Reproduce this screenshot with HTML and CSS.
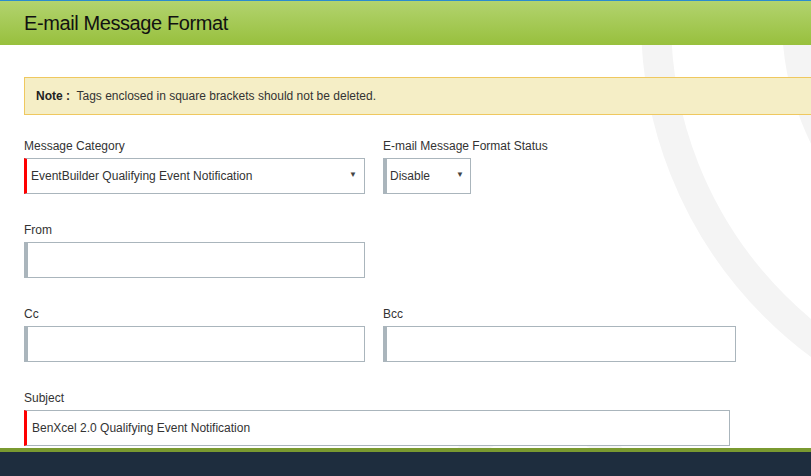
FILE: index.html
```html
<!DOCTYPE html>
<html lang="en">
<head>
    <meta charset="utf-8">
    <title>E-mail Message Format</title>
    <link rel="stylesheet" href="styles.css">
</head>
<body>

    <svg class="watermark" width="811" height="476" viewBox="0 0 811 476" aria-hidden="true">
        <circle cx="1060" cy="20" r="404" />
        <circle cx="1060" cy="20" r="263" />
        <circle cx="540" cy="522" r="100" class="faint" />
    </svg>

    <div class="page-header">
        <h1 class="page-title">E-mail Message Format</h1>
    </div>

    <div class="page-content">
        <div class="note">
            <b>Note :</b>&nbsp; Tags enclosed in square brackets should not be deleted.
        </div>

        <form class="mail-form">
            <div class="field field-wide">
                <label>Message Category</label>
                <div class="select-wrap required">
                    <select>
                        <option>EventBuilder Qualifying Event Notification</option>
                    </select>
                </div>
            </div>
            <div class="field">
                <label>E-mail Message Format Status</label>
                <div class="select-wrap select-small">
                    <select>
                        <option>Disable</option>
                    </select>
                </div>
            </div>

            <div class="field field-wide">
                <label>From</label>
                <input type="text" class="text-input">
            </div>
            <div class="field"></div>

            <div class="field field-wide">
                <label>Cc</label>
                <input type="text" class="text-input">
            </div>
            <div class="field">
                <label>Bcc</label>
                <input type="text" class="text-input">
            </div>

            <div class="field field-full">
                <label>Subject</label>
                <input type="text" class="text-input required" value="BenXcel 2.0 Qualifying Event Notification">
            </div>
        </form>
    </div>

    <div class="page-footer"></div>

</body>
</html>
```

FILE: styles.css
```css
html, body {
    margin:0;
    padding:0;
}

body {
    position:relative;
    height:476px;
    overflow:hidden;
    background:#fff;
    color:#333;
    font:normal 12px "Liberation Sans", Arial, sans-serif;
}

/* background logo */
.watermark {
    position:absolute;
    top:0;
    left:0;
    z-index:0;
    pointer-events:none;
}

.watermark circle {
    fill:none;
    stroke:#f4f4f4;
    stroke-width:30;
}

.watermark .faint {
    stroke:#f7f7f7;
    stroke-width:22;
}

/* header */
.page-header {
    position:relative;
    z-index:1;
    height:44px;
    border-top:1px solid #2a8ccf;
    background:linear-gradient(to bottom, #b2d36f 0%, #98c03d 100%);
    padding-left:24px;
}

.page-title {
    margin:0;
    font:normal 20px/44px "Liberation Sans", Arial, sans-serif;
    letter-spacing:-0.4px;
    color:#111;
}

/* content */
.page-content {
    position:relative;
    z-index:1;
    padding:32px 0 0 24px;
}

.note {
    height:36px;
    line-height:36px;
    margin-right:-40px;
    padding:0 11px;
    border:1px solid #efc85f;
    background:#f5eec6;
    color:#333;
}

.note b {
    color:#222;
}

.mail-form {
    display:flex;
    flex-wrap:wrap;
    column-gap:18px;
    margin-top:23px;
    width:720px;
}

.field {
    width:353px;
    margin-bottom:28px;
}

.field-wide {
    width:341px;
}

.field-full {
    width:706px;
}

.field label {
    display:block;
    line-height:16px;
    margin-bottom:4px;
    color:#333;
}

.text-input, .select-wrap select {
    display:block;
    box-sizing:border-box;
    width:100%;
    height:36px;
    margin:0;
    border:1px solid #aab5bc;
    border-left:4px solid #aab5bc;
    border-radius:0;
    background:#fff;
    color:#333;
    font:normal 12px "Liberation Sans", Arial, sans-serif;
    outline:0;
}

.text-input {
    padding:0 4px;
}

.text-input.required {
    border-left:3px solid #f00;
    padding-left:5px;
}

.select-wrap {
    position:relative;
}

.select-wrap select {
    -webkit-appearance:none;
    appearance:none;
    padding:0 20px 0 3px;
}

.select-wrap.required select {
    border-left:3px solid #f00;
    padding-left:4px;
}

.select-wrap:after {
    content:"\25BC";
    position:absolute;
    right:8px;
    top:12px;
    font-size:8px;
    color:#444;
    pointer-events:none;
}

.select-small {
    width:88px;
}

.select-small:after {
    right:7px;
}

/* footer */
.page-footer {
    position:relative;
    z-index:1;
    height:40px;
    margin-top:-26px;
    border-top:4px solid #7a9a30;
    background:#1e2d3e;
}
```
